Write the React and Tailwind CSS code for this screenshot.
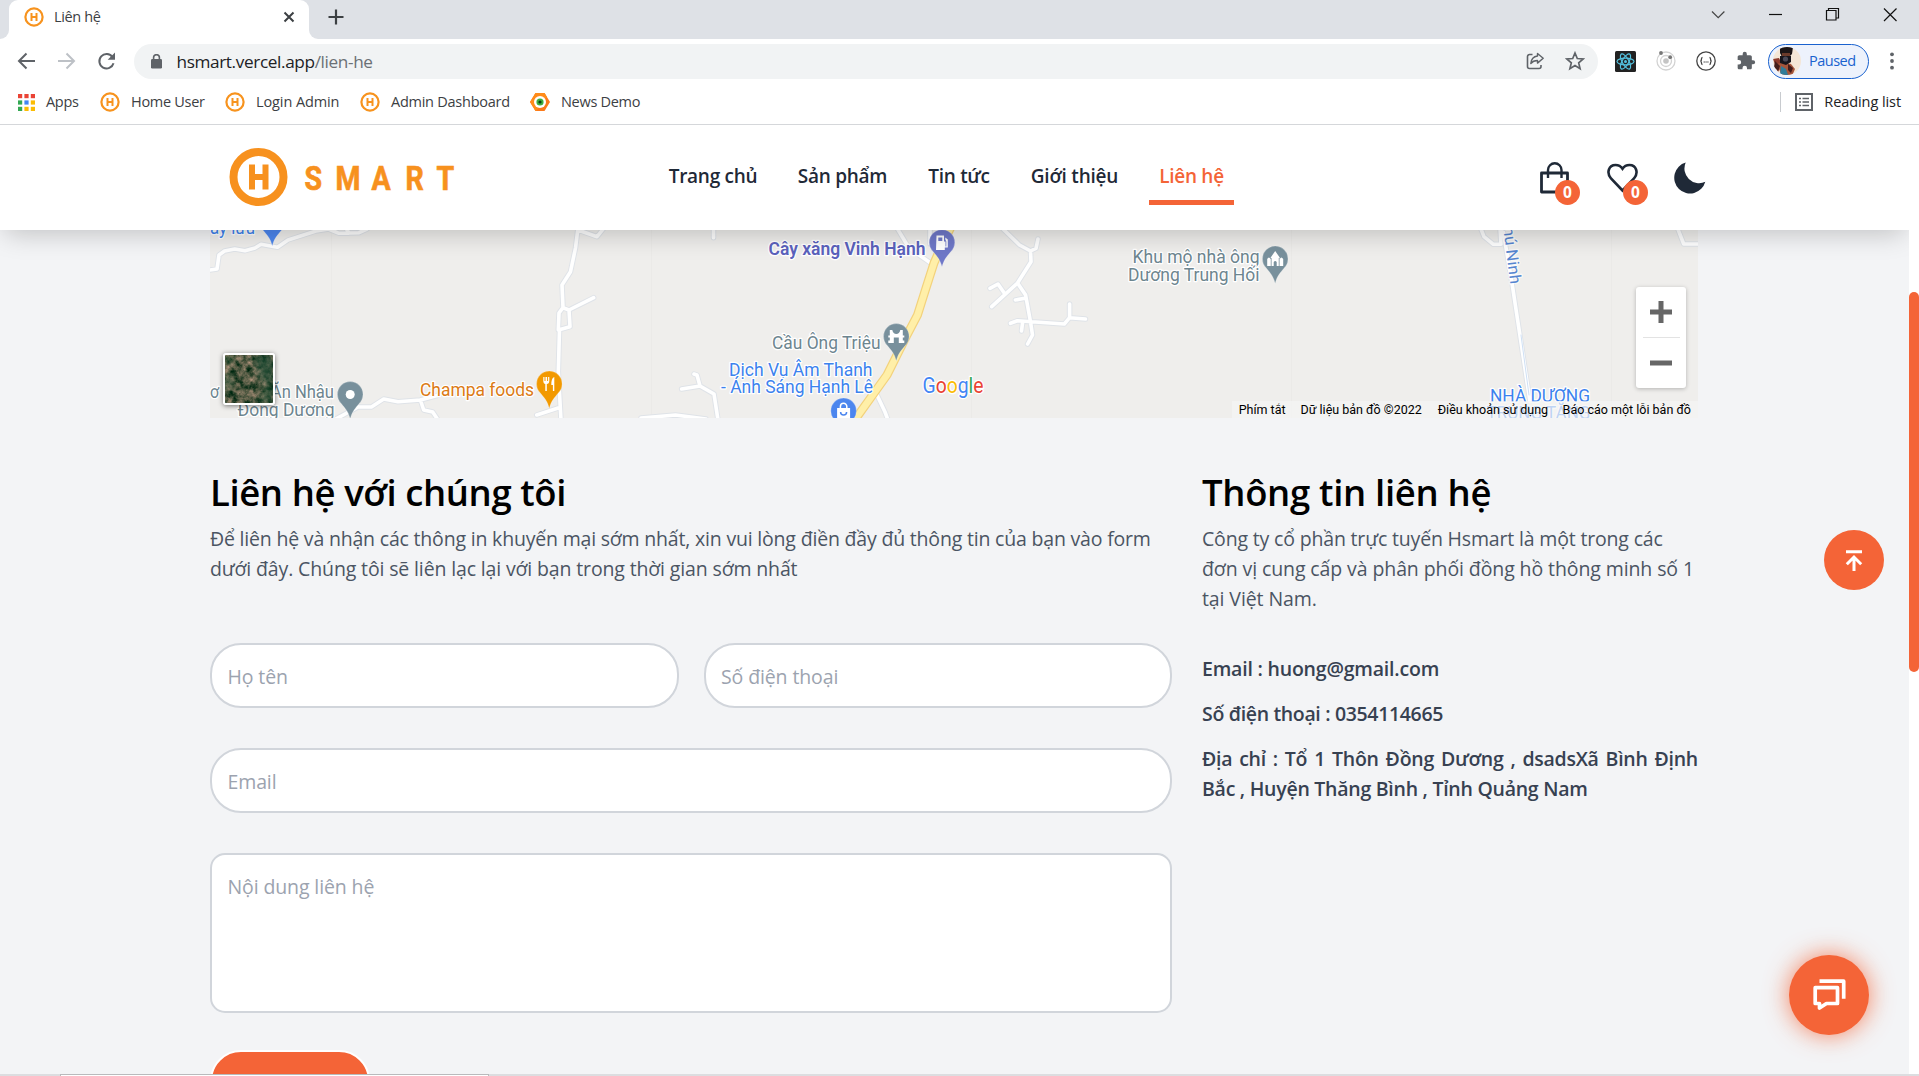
import React from "react";

const UI = "font-['Open_Sans','Noto_Sans',sans-serif]";

function HBadge() {
  return (
    <svg width="20" height="20" viewBox="0 0 20 20" className="shrink-0">
      <circle cx="10" cy="10" r="8.6" fill="#fff" stroke="#f7931e" strokeWidth="2.2" />
      <path d="M7.5 6v8M12.5 6v8M7.5 10h5" stroke="#f7931e" strokeWidth="2" fill="none" />
    </svg>
  );
}

function NewsIcon() {
  return (
    <svg width="20" height="20" viewBox="0 0 20 20" className="shrink-0">
      <path d="M5.5 1h9L20 10l-5.500 9h-9L0 10z" fill="#fb7a1a" />
      <path d="M5.5 1h9L17 5 6 19h-.5L0 10z" fill="#ff8c1a" />
      <circle cx="10" cy="10" r="6" fill="#fff" />
      <circle cx="10" cy="10" r="3.600" fill="#3fae3f" />
      <circle cx="10" cy="10" r="1.600" fill="#0b3d12" />
    </svg>
  );
}

function AppsIcon() {
  const colors = ["#ea4335", "#ea4335", "#ea4335", "#34a853", "#4285f4", "#fbbc04", "#34a853", "#fbbc04", "#fbbc04"];
  return (
    <svg width="17" height="17" viewBox="0 0 17 17" className="shrink-0">
      {colors.map((c, i) => (
        <rect key={i} x={(i % 3) * 6.4} y={Math.floor(i / 3) * 6.4} width="4.2" height="4.2" fill={c} />
      ))}
    </svg>
  );
}

function TabStrip() {
  return (
    <div className="flex h-[39px] bg-[#dee1e6]">
      <div className="flex w-[9px] bg-white">
        <div className="h-full w-full rounded-br-[9px] bg-[#dee1e6]" />
      </div>
      <div className="flex w-[300px] bg-[#dee1e6]">
        <div className="flex h-full w-full items-center rounded-t-[9px] bg-white pb-[5px] pl-[15px] pr-[13px]">
          <HBadge />
          <span className="ml-[10px] mt-[-1px] flex-1 text-[14.5px] tracking-[-0.35px] text-[#3c4043]">Liên hệ</span>
          <svg width="14" height="14" viewBox="0 0 14 14">
            <path d="M2.5 2.5l9 9M11.5 2.5l-9 9" stroke="#3c4043" strokeWidth="2" />
          </svg>
        </div>
      </div>
      <div className="flex w-[9px] bg-white">
        <div className="h-full w-full rounded-bl-[9px] bg-[#dee1e6]" />
      </div>
      <svg width="18" height="18" viewBox="0 0 18 18" className="ml-[9px] mt-[8px]">
        <path d="M9 1.500v15M1.500 9h15" stroke="#3c4043" strokeWidth="2.200" />
      </svg>
      <div className="flex-1" />
      <svg width="190" height="28" viewBox="0 0 190 28" fill="none" stroke="#111" strokeWidth="1.200">
        <path d="M3 11.500l6.200 6.200 6.200-6.200" stroke="#444" />
        <path d="M60 14.500h13" />
        <path d="M117.500 10.500h9.500v9.500h-9.500zM119.500 10.500v-2h10v9.500h-2.500" />
        <path d="M175 8.500l12.500 12.500M187.500 8.500l-12.500 12.500" />
      </svg>
      <div className="w-[20px]" />
    </div>
  );
}

function Toolbar() {
  return (
    <div className="flex h-[44px] items-center bg-white pl-[17px]">
      <svg width="100" height="20" viewBox="0 0 100 20" fill="none" strokeWidth="2" className="shrink-0">
        <path d="M18 10H2.500M9.500 2.500L2 10l7.500 7.500" stroke="#5f6368" />
        <path d="M41 10h15.500M49.500 2.500L57 10l-7.500 7.500" stroke="#bdc1c6" />
        <path d="M95.500 6.200A7.200 7.200 0 1 0 96.500 12.200" stroke="#5f6368" />
        <path d="M98 1.500v7.300h-7.300z" fill="#5f6368" stroke="none" />
      </svg>
      <div className="ml-[17px] flex h-[35px] w-[1464px] shrink-0 items-center rounded-full bg-[#f1f3f4] pl-[17px] pr-[13px]">
        <svg width="11" height="15" viewBox="0 0 11 15">
          <rect y="5" width="11" height="9.500" rx="1.300" fill="#5f6368" />
          <path d="M2.600 6V3.600a2.900 2.900 0 0 1 5.800 0V6" fill="none" stroke="#5f6368" strokeWidth="1.600" />
        </svg>
        <span className="ml-[14.500px] mt-[1px] flex-1 text-[17.2px] tracking-[-0.37px] text-[#202124]">
          hsmart.vercel.app<span className="text-[#6b7075]">/lien-he</span>
        </span>
        <svg width="18" height="18" viewBox="0 0 18 18" fill="none" stroke="#5f6368" strokeWidth="1.600" strokeLinejoin="round">
          <path d="M6.500 2.500H3.500a2 2 0 0 0-2 2v10a2 2 0 0 0 2 2h9.500a2 2 0 0 0 2-2V13" />
          <path d="M11.500 1.500l5.700 4.800-5.700 4.800V8.500c-3 0-5 .8-6.700 3 .4-4 2.700-7 6.700-7.500z" strokeWidth="1.400" />
        </svg>
        <svg width="20" height="20" viewBox="0 0 20 20" fill="none" stroke="#5f6368" strokeWidth="1.700" className="ml-[21px]">
          <path d="M10 2l2.300 5.500 5.900.5-4.500 3.900 1.400 5.800L10 14.600l-5.100 3.100 1.400-5.800L1.800 8l5.900-.5z" />
        </svg>
      </div>
      <svg width="21" height="21" viewBox="0 0 21 21" fill="none" stroke="#53c1de" strokeWidth="1.200" className="ml-[17px] shrink-0">
        <rect width="21" height="21" rx="1.500" fill="#222" stroke="none" />
        <ellipse cx="10.500" cy="10.500" rx="8.500" ry="3.300" />
        <ellipse cx="10.500" cy="10.500" rx="8.500" ry="3.300" transform="rotate(60 10.500 10.500)" />
        <ellipse cx="10.500" cy="10.500" rx="8.500" ry="3.300" transform="rotate(120 10.500 10.500)" />
        <circle cx="10.500" cy="10.500" r="1.500" fill="#53c1de" stroke="none" />
      </svg>
      <svg width="20" height="20" viewBox="0 0 20 20" fill="none" stroke="#d3d3d3" strokeWidth="1.300" className="ml-[20px] shrink-0">
        <circle cx="10" cy="10" r="9" />
        <circle cx="10" cy="10" r="5.500" />
        <circle cx="10" cy="10" r="2.800" fill="#c4c4c4" stroke="none" />
        <circle cx="5" cy="2" r="1.900" fill="#777" stroke="none" />
        <circle cx="14.200" cy="6.200" r="1.900" fill="#777" stroke="none" />
      </svg>
      <svg width="20" height="20" viewBox="0 0 20 20" fill="none" stroke="#444" strokeWidth="1.300" className="ml-[20px] shrink-0">
        <circle cx="10" cy="10" r="9.200" />
        <path d="M6.500 6.500c-1.500 0-1 2-1.200 2.800-.1.500-.6.700-1 .7.400 0 .9.200 1 .7.200.8-.3 2.800 1.200 2.800M13.500 6.500c1.500 0 1 2 1.200 2.800.1.500.6.700 1 .7-.4 0-.9.200-1 .7-.2.800.3 2.800-1.200 2.800" />
        <path d="M7.700 11h.9M9.600 11h.9M11.500 11h.9" />
      </svg>
      <svg width="20" height="20" viewBox="0 0 24 24" fill="#5f6368" className="ml-[20px] shrink-0">
        <path d="M20.500 11H19V7c0-1.100-.9-2-2-2h-4V3.500a2.500 2.500 0 0 0-5 0V5H4c-1.100 0-2 .9-2 2v3.800h1.500a2.700 2.700 0 0 1 0 5.400H2V20c0 1.100.9 2 2 2h3.800v-1.500a2.700 2.700 0 0 1 5.400 0V22H17c1.100 0 2-.9 2-2v-4h1.500a2.500 2.500 0 0 0 0-5z" />
      </svg>
      <div className="ml-[12px] flex h-[35px] w-[101px] shrink-0 items-center rounded-full border-[1.500px] border-[#1a62cf] bg-[#edf2fc] pl-[4px]">
        <svg width="28" height="28" viewBox="0 0 28 28">
          <clipPath id="avatar"><circle cx="14" cy="14" r="14" /></clipPath>
          <g clipPath="url(#avatar)">
            <rect width="28" height="28" fill="#f4e6d6" />
            <path d="M0 12l6-1 3 6-4 8z" fill="#8c3a2c" />
            <path d="M7 0h13l-1 7-3 3H9L7 6z" fill="#1c1516" />
            <path d="M9 6h8v4H9z" fill="#6b3a2a" />
            <path d="M4 17l6-2 8 2 4 5-3 7H9z" fill="#a4553b" />
            <path d="M8 19l5 3 2 6H7z" fill="#2f7c9a" />
            <path d="M7 9h11v6l-5 3-6-2z" fill="#17151c" />
            <circle cx="12.500" cy="12" r="2.600" fill="#4a4856" />
            <path d="M2 14l5 5-2 5-4-4zM15 17l5 4-2 5-3-3z" fill="#431d1b" />
          </g>
        </svg>
        <span className="ml-[8px] text-[14.500px] tracking-[-0.5px] text-[#1a62cf]">Paused</span>
      </div>
      <svg width="4" height="18" viewBox="0 0 4 18" fill="#5f6368" className="ml-[21px] shrink-0">
        <circle cx="2" cy="2.300" r="1.900" /><circle cx="2" cy="9" r="1.900" /><circle cx="2" cy="15.700" r="1.900" />
      </svg>
    </div>
  );
}

function Bookmark({ icon, label, className }) {
  return (
    <div className={"flex items-center " + className}>
      {icon}
      <span className="ml-[11px] whitespace-nowrap">{label}</span>
    </div>
  );
}

function Bookmarks() {
  return (
    <div className="flex h-[42px] items-center border-b border-[#d5d7da] bg-white pb-[3px] pl-[18px] text-[14.500px] tracking-[-0.3px] text-[#3c4043]">
      <Bookmark className="w-[82px]" icon={<AppsIcon />} label="Apps" />
      <Bookmark className="w-[125px]" icon={<HBadge />} label="Home User" />
      <Bookmark className="w-[135px] tracking-[-0.1px]" icon={<HBadge />} label="Login Admin" />
      <Bookmark className="w-[170px] tracking-[-0.25px]" icon={<HBadge />} label="Admin Dashboard" />
      <Bookmark className="w-[130px]" icon={<NewsIcon />} label="News Demo" />
      <div className="flex-1" />
      <div className="h-[20px] w-px bg-[#c8cbcf]" />
      <svg width="18" height="18" viewBox="0 0 18 18" fill="none" stroke="#5f6368" strokeWidth="2" className="ml-[14px]">
        <rect x="1" y="1" width="16" height="16" />
        <path d="M4 5.500h2M7.500 5.500h6.500M4 9h2M7.500 9h6.500M4 12.500h2M7.500 12.500h6.500" strokeWidth="1.700" />
      </svg>
      <span className="ml-[11px] mr-[18px] whitespace-nowrap tracking-[-0.08px] text-[#202124]">Reading list</span>
    </div>
  );
}

function Logo() {
  const letters = [["S", 75.5], ["M", 106.500], ["A", 142.500], ["R", 176.500], ["T", 207.500]];
  return (
    <svg width="226" height="60" viewBox="0 0 226 60" className="mt-[-2px] shrink-0">
      <circle cx="29.500" cy="30" r="25" fill="#fff" stroke="#f7911e" strokeWidth="8" />
      <path d="M23 17.500v25M36.500 17.500v25M23 30h13.500" fill="none" stroke="#f7911e" strokeWidth="6" />
      {letters.map(([c, x]) => (
        <text key={c} transform={`translate(${x} 42.500) scale(0.84 1)`} fontFamily="Roboto" fontWeight="700" fontSize="34" fill="#f7911e" stroke="#f7911e" strokeWidth="0.700">{c}</text>
      ))}
    </svg>
  );
}

function CountBadge() {
  return (
    <span className="absolute left-[15px] top-[19px] flex h-[25px] w-[25px] items-center justify-center rounded-full bg-[#f46437] pt-px text-[15.500px] font-bold text-white">0</span>
  );
}

function SiteHeader() {
  const item = "flex h-[58px] items-center justify-center border-b-[5px] pt-[6px]";
  return (
    <header className="relative z-10 flex h-[105px] shrink-0 items-center bg-white pl-[229px] shadow-[0_8px_25px_-5px_rgba(0,0,0,0.22)]">
      <Logo />
      <nav className="ml-[204px] mt-[-3px] flex gap-[20.500px] whitespace-nowrap text-[19px] font-semibold tracking-[-0.28px] text-[#1f2937]">
        <a className={item + " w-[108px] border-transparent"}>Trang chủ</a>
        <a className={item + " w-[110px] border-transparent"}>Sản phẩm</a>
        <a className={item + " w-[82px] border-transparent"}>Tin tức</a>
        <a className={item + " w-[108px] border-transparent tracking-[-0.2px]"}>Giới thiệu</a>
        <a className={item + " w-[85px] border-[#f46437] text-[#f46437]"}>Liên hệ</a>
      </nav>
      <div className="relative ml-[306px] h-[33px] w-[30px]">
        <svg width="30" height="33" viewBox="0 0 30 33" fill="none" stroke="#1f2937" strokeWidth="2.800" strokeLinejoin="round">
          <path d="M1.500 12h26v19h-26z" />
          <path d="M8 17V9a6.700 6.700 0 0 1 13.500 0V17" strokeWidth="2.400" />
        </svg>
        <CountBadge />
      </div>
      <div className="relative ml-[38px] h-[33px] w-[32px]">
        <svg width="32" height="33" viewBox="0 0 32 33" fill="none" stroke="#1f2937" strokeWidth="2.600" className="ml-[-1.500px]">
          <path d="M15.500 29.500L4 17.500C-1 11.500 2 4 8.500 4c3 0 5.500 1.400 7 3.700 1.500-2.300 4-3.700 7-3.700 6.500 0 9.500 7.500 4.500 13.500z" />
        </svg>
        <CountBadge />
      </div>
      <svg width="32" height="32" viewBox="0 0 32 32" fill="#1f2937" className="ml-[33.500px]">
        <path d="M11.700 0.500A15.800 15.800 0 1 0 31.300 19.800A14.700 14.700 0 0 1 11.700 0.500z" />
      </svg>
    </header>
  );
}

const roads = [
  "M0 40L7 39L9 25L14.500 21L24.700 19L35 20.700L45 18L51 14.300L67.500 17.300L78 10L106 1L118.500 -1L129 3.300L149 2.700L157 -1M137 0L139 3",
  "M368 -2L365.500 18L360.500 41.700L352 55L353 77.700L349 83L348.300 100L360 96.700L359 80L353 77.700M359 80L383.700 67.700M349.500 100L348.300 141.700L351 190M349 177.700L326.700 185M368 0L387 6.700L394 -2",
  "M503.500 -2V7.700",
  "M148 177L161.400 177L173.700 169L188 171.700L210.400 170L229 165M210.400 170L213.700 180L222.700 182L228 190M124 190L148 177",
  "M484 144L487 145L490 156L471.600 159M490 156L504 164L508 190M431 188L465.500 185L496 189",
  "M687 -2L699 18L722 34M720 0V14M667 165L675 182L678 190",
  "M792 -2L809.500 15L820.500 21L826 18.300L828 9M820.500 21L821 31.700L807.500 53L781.700 76.700M794.400 63.300L788 54L780 58.300M807.500 53L815.600 65L820.500 91.700L822.500 105L817.600 114M816 68L805.400 70M800.500 93.300L807.400 90.700L854.300 94L859.600 87.700V74M859.600 87.700L875.500 89M812.700 91.700L811.500 101",
  "M1270.600 -2L1274 6.700L1283.400 14.300L1291 14.300L1290 -2M1292.600 -2L1301.800 51.700L1320 171.700M1467.500 -2L1473.700 14L1490 14",
];

const highway = "M741 -3L732 15L724 33L716 58L707.500 85L697 105L677 145L660.500 168L644 191";

function Pin({ x, y, fill, children }) {
  return (
    <g transform={`translate(${x} ${y})`}>
      <path d="M0 24.500C-1.800 17 -5 14 -9 9A12.800 12.800 0 1 1 9 9C5 14 1.800 17 0 24.500z" fill={fill} stroke="#fff" strokeOpacity="0.4" strokeWidth="0.600" />
      {children}
    </g>
  );
}

function Label({ x, y, w, fill, weight = 400, children, ...rest }) {
  return (
    <text x={x} y={y} textLength={w} lengthAdjust="spacingAndGlyphs" fill={fill} fontWeight={weight} stroke="#fff" strokeWidth="2.500" strokeLinejoin="round" paintOrder="stroke" {...rest}>
      {children}
    </text>
  );
}

function MapDrawing() {
  const slate = "#6d858f";
  const blue = "#3c82ee";
  return (
    <svg width="1488" height="188" viewBox="0 0 1488 188" fontFamily="Roboto" fontSize="18" className="block bg-[#efeeec]">
      <path d="M121.500 0V188M441.500 0V188M761.500 0V188M1081.500 0V188M1401.500 0V188" stroke="#ebeae8" strokeWidth="1" />
      <g fill="none" strokeLinejoin="round" strokeLinecap="round">
        {roads.map((d) => <path key={d} d={d} stroke="#dfe3e8" strokeWidth="5.500" />)}
        {roads.map((d) => <path key={d} d={d} stroke="#fff" strokeWidth="3.600" />)}
        <path d="M1311 105L1319 165" stroke="#cfe0f5" strokeWidth="1" />
        <path d={highway} stroke="#f3d27c" strokeWidth="9" />
        <path d={highway} stroke="#ffefa8" strokeWidth="6.500" />
      </g>
      <Label x="0" y="3.700" w="45" fill={blue}>ầy lưu</Label>
      <Label x="0" y="168" w="9" fill={slate}>ơ</Label>
      <Label x="18" y="168" w="106" fill={slate}>Quán Ăn Nhậu</Label>
      <Label x="27.500" y="186" w="97" fill={slate}>Đông Dương</Label>
      <Label x="210" y="166" w="114" fill="#dc7a14">Champa foods</Label>
      <Label x="558.500" y="25" w="157" fill="#5b62bd" weight="600">Cây xăng Vinh Hạnh</Label>
      <Label x="562" y="118.500" w="108.500" fill={slate}>Cầu Ông Triệu</Label>
      <Label x="519" y="145.500" w="143.500" fill={blue}>Dịch Vụ Âm Thanh</Label>
      <Label x="511" y="163" w="152" fill={blue}>- Ánh Sáng Hạnh Lê</Label>
      <Label x="922.500" y="33.300" w="127" fill={slate}>Khu mộ nhà ông</Label>
      <Label x="918" y="50.700" w="131.500" fill={slate}>Dương Trung Hối</Label>
      <Label x="1280" y="171.500" w="100" fill={blue}>NHÀ DƯƠNG</Label>
      <Label x="1276.500" y="188.500" w="104" fill={blue}>TRUNG TĂNG</Label>
      <Label x="0" y="0" w="68" fill="#5585d0" fontSize="16" strokeOpacity="0.600" transform="translate(1292 -13) rotate(83)">Phú Ninh</Label>
      <Pin x="62.300" y="-8.500" fill="#4c86ee" />
      <Pin x="140.200" y="164.500" fill="#78909c"><circle r="4.500" fill="#fff" /></Pin>
      <Pin x="339.300" y="154" fill="#f29900">
        <path d="M-6 -7v4c0 2 1 3 2 3v7h1.500V0c1.500 0 2.500-1 2.500-3v-4h-1.200v4h-1v-4h-1.600v4h-1v-4zM5 -7C2.500 -6 2 -3 2 1h1.600v6H5z" fill="#fff" />
      </Pin>
      <Pin x="732" y="12.500" fill="#6f78c8">
        <path d="M-5.500 -7h7.500v6h1.500v5h.8v-5l-1-2v-2l2.500 2v8h-3v2.500h-8.800zM-3.700 -5v3.500h4v-3.500z" fill="#fff" fillRule="evenodd" />
      </Pin>
      <Pin x="686.300" y="106.500" fill="#78909c">
        <path d="M-8 6.500v-2.500h1.500v-3h-1.500v-2h1.500v-5.500h2.500c.5 2.500 2 4 4 4s3.500-1.500 4-4h2.500v5.500h1.500v2h-1.500v3h1.500v2.500h-5.500v-5.500h-5v5.500z" fill="#fff" />
      </Pin>
      <Pin x="633.600" y="181" fill="#4c86ee">
        <path d="M-6.500 -3h13v12h-13z" fill="#fff" />
        <path d="M-3.200 -3v-1.500a3.200 3.200 0 0 1 6.400 0v1.500" fill="none" stroke="#fff" strokeWidth="1.500" />
        <path d="M-3 1a3 3 0 0 0 6 0" fill="none" stroke="#4c86ee" strokeWidth="1.500" />
      </Pin>
      <Pin x="1065.200" y="29" fill="#78909c">
        <path d="M-8 7v-7q1.700-3 3.500 0v-1.500L0 -8l4.500 6.500V0q1.700-3 3.500 0v7H1.500V3q-1.500-2-3 0v4z" fill="#fff" />
        <path d="M-4 -1v8M4 -1v8" stroke="#78909c" strokeWidth="0.800" />
      </Pin>
      <text x="712.500" y="162.500" fontSize="22.500" textLength="61" lengthAdjust="spacingAndGlyphs" stroke="#fff" strokeWidth="2.500" paintOrder="stroke">
        <tspan fill="#4285f4">G</tspan><tspan fill="#ea4335">o</tspan><tspan fill="#fbbc04">o</tspan><tspan fill="#4285f4">g</tspan><tspan fill="#34a853">l</tspan><tspan fill="#ea4335">e</tspan>
      </text>
    </svg>
  );
}

function Satellite() {
  return (
    <svg width="48" height="48" viewBox="0 0 48 48">
      <defs>
        <filter id="ground" x="0" y="0" width="100%" height="100%" colorInterpolationFilters="sRGB">
          <feTurbulence type="fractalNoise" baseFrequency="0.140" numOctaves="4" seed="7" />
          <feColorMatrix values="1.300 0 0 0 -0.330  0.800 0 0 0 -0.050  0.800 0 0 0 -0.140  0 0 0 0 1" />
        </filter>
        <filter id="canopy"><feGaussianBlur stdDeviation="3" /></filter>
      </defs>
      <rect width="48" height="48" filter="url(#ground)" />
      <g filter="url(#canopy)" opacity="0.650">
        <path d="M28 0h20v30l-12-4z" fill="#225039" />
        <path d="M0 18l8 4-2 12-6 2zM40 30h8v18H34z" fill="#234f34" />
        <path d="M0 0h8v8H0z" fill="#2c5535" />
      </g>
    </svg>
  );
}

function MapSection() {
  return (
    <section className="relative ml-[210px] h-[188px] w-[1488px] shrink-0 overflow-hidden">
      <MapDrawing />
      <div className="absolute left-[13px] top-[123px] overflow-hidden rounded-[3px] border-2 border-white shadow-[0_1px_5px_rgba(0,0,0,0.5)]">
        <Satellite />
      </div>
      <div className="absolute right-[12px] top-[57px] flex h-[101px] w-[50px] flex-col items-center rounded-[3px] bg-white shadow-[0_1px_4px_rgba(0,0,0,0.25)]">
        <div className="flex flex-1 items-center">
          <svg width="22" height="22" viewBox="0 0 22 22"><path d="M11 0v22M0 11h22" stroke="#666" strokeWidth="5" /></svg>
        </div>
        <div className="h-px w-[37px] bg-[#e3e3e3]" />
        <div className="flex flex-1 items-center">
          <svg width="22" height="22" viewBox="0 0 22 22"><path d="M0 11h22" stroke="#666" strokeWidth="5" /></svg>
        </div>
      </div>
      <div className="absolute bottom-0 right-0 flex h-[17px] items-center whitespace-nowrap bg-[#f5f5f5]/70 pl-[7px] pr-[7px] pt-[2px] font-[Roboto] text-[12.500px] text-black">
        <span className="mr-[15px]">Phím tắt</span>
        <span className="mr-[16px]">Dữ liệu bản đồ ©2022</span>
        <span className="mr-[14.500px]">Điều khoản sử dụng</span>
        <span>Báo cáo một lỗi bản đồ</span>
      </div>
    </section>
  );
}

const field = "block border-2 border-[#d1d5db] bg-white px-[15.500px] text-[19.500px] tracking-[-0.12px] outline-none placeholder:text-[#9ca3af]";

function ContactSection() {
  return (
    <section className="ml-[210px] mt-[51.500px] flex w-[1488px] justify-between">
      <div className="w-[961.500px]">
        <h2 className="text-[36.500px] font-semibold leading-[45px] tracking-[-0.4px] text-black">Liên hệ với chúng tôi</h2>
        <p className="mt-[9.500px] whitespace-nowrap text-[19.500px] leading-[30px] text-[#4b5563]">
          <span className="tracking-[-0.19px]">Để liên hệ và nhận các thông in khuyến mại sớm nhất, xin vui lòng điền đầy đủ thông tin của bạn vào form</span>
          <br />
          <span className="tracking-[-0.14px]">dưới đây. Chúng tôi sẽ liên lạc lại với bạn trong thời gian sớm nhất</span>
        </p>
        <div className="mt-[59px] flex justify-between">
          <input placeholder="Họ tên" className={field + " h-[65px] w-[469px] rounded-[31px] pt-[1px]"} />
          <input placeholder="Số điện thoại" className={field + " h-[65px] w-[468px] rounded-[31px] pt-[1px]"} />
        </div>
        <input placeholder="Email" className={field + " mt-[40px] h-[65px] w-full rounded-[31px] pt-[1px]"} />
        <textarea placeholder="Nội dung liên hệ" className={field + " mt-[40px] h-[160px] w-full resize-none rounded-[15px] pt-[17px] leading-[30px]"} />
        <div className="mt-[37px] h-[65px] w-[159.500px] rounded-[31px] border-2 border-white bg-[#f46437]" />
      </div>
      <div className="w-[496px] whitespace-nowrap">
        <h2 className="text-[36.500px] font-semibold leading-[45px] tracking-[-0.32px] text-black">Thông tin liên hệ</h2>
        <p className="mt-[9.500px] text-[19.500px] leading-[30px] tracking-[-0.1px] text-[#4b5563]">
          <span className="tracking-[-0.17px]">Công ty cổ phần trực tuyến Hsmart là một trong các</span>
          <br />đơn vị cung cấp và phân phối đồng hồ thông minh số 1
          <br />tại Việt Nam.
        </p>
        <div className="mt-[40px] flex flex-col gap-[15px] text-[19.500px] font-semibold leading-[30px] text-[#374151]">
          <p className="tracking-[-0.2px]">Email : huong@gmail.com</p>
          <p className="tracking-[-0.34px]">Số điện thoại : 0354114665</p>
          <p className="whitespace-normal text-justify tracking-[-0.26px]">
            Địa chỉ : Tổ 1 Thôn Đồng Dương , dsadsXã Bình Định Bắc , Huyện Thăng Bình , Tỉnh Quảng Nam
          </p>
        </div>
      </div>
    </section>
  );
}

export default function App() {
  return (
    <div className={"flex h-[1076px] w-[1919px] flex-col overflow-hidden bg-white " + UI}>
      <TabStrip />
      <Toolbar />
      <Bookmarks />
      <div className="relative flex h-[949px] shrink-0">
        <main className="flex w-[1909px] flex-col overflow-hidden bg-[#f3f4f6]">
          <SiteHeader />
          <MapSection />
          <ContactSection />
        </main>
        <div className="w-[10px] bg-white pt-[167px]">
          <div className="h-[380px] w-[10px] rounded-full bg-[#f46437]" />
        </div>
        <button className="absolute right-[35px] top-[405px] flex h-[60px] w-[60px] items-center justify-center rounded-full bg-[#f46437]">
          <svg width="18" height="21" viewBox="0 0 18 21" fill="none" stroke="#fff" strokeWidth="3">
            <path d="M1 1.700h16M9 21V8M1.800 14.200L9 7l7.200 7.200" />
          </svg>
        </button>
        <button className="absolute right-[50px] top-[830px] flex h-[80px] w-[80px] items-center justify-center rounded-full bg-[#f46437] shadow-[0_0_25px_0_rgba(244,100,55,0.8)]">
          <svg width="33" height="33" viewBox="0 0 33 33" fill="none" stroke="#fff" strokeWidth="3.700" strokeLinejoin="round">
            <path d="M2.200 8.700h22.300v15.800H13.500L6.500 29v-4.500H2.200z" />
            <path d="M6.500 2.200h24.200v17.500" />
          </svg>
        </button>
      </div>
      <div className="flex h-[2px] shrink-0 bg-[#dcdde0]">
        <div className="ml-[60px] w-[429px] border border-b-0 border-[#b9babc] bg-white" />
      </div>
    </div>
  );
}
